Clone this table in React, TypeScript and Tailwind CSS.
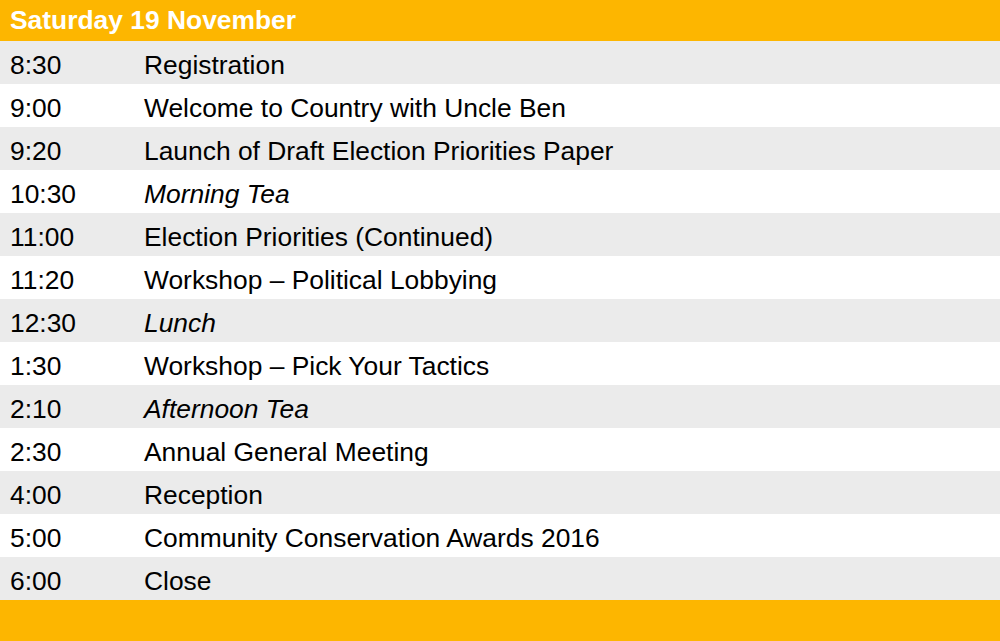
import React from "react";

const rows: { t: string; e: string; i?: boolean }[] = [
  { t: "8:30", e: "Registration" },
  { t: "9:00", e: "Welcome to Country with Uncle Ben" },
  { t: "9:20", e: "Launch of Draft Election Priorities Paper" },
  { t: "10:30", e: "Morning Tea", i: true },
  { t: "11:00", e: "Election Priorities (Continued)" },
  { t: "11:20", e: "Workshop – Political Lobbying" },
  { t: "12:30", e: "Lunch", i: true },
  { t: "1:30", e: "Workshop – Pick Your Tactics" },
  { t: "2:10", e: "Afternoon Tea", i: true },
  { t: "2:30", e: "Annual General Meeting" },
  { t: "4:00", e: "Reception" },
  { t: "5:00", e: "Community Conservation Awards 2016" },
  { t: "6:00", e: "Close" },
];

export default function App() {
  return (
    <div
      className="w-[1000px] h-[641px] flex flex-col bg-white text-black"
      style={{ fontFamily: '"Liberation Sans", Arial, sans-serif' }}
    >
      <div className="h-[41px] bg-[#fdb600] flex items-center px-[10px]">
        <span className="text-[26.4px] font-bold text-white leading-none">Saturday 19 November</span>
      </div>
      {rows.map((r, idx) => (
        <div
          key={idx}
          className={`h-[43px] flex items-center pt-[6px] text-[26.4px] leading-none ${idx % 2 === 0 ? "bg-[#ebebeb]" : "bg-white"}`}
        >
          <span className="w-[144px] pl-[10px]">{r.t}</span>
          <span className={r.i ? "italic" : ""}>{r.e}</span>
        </div>
      ))}
      <div className="flex-1 bg-[#fdb600]" />
    </div>
  );
}
